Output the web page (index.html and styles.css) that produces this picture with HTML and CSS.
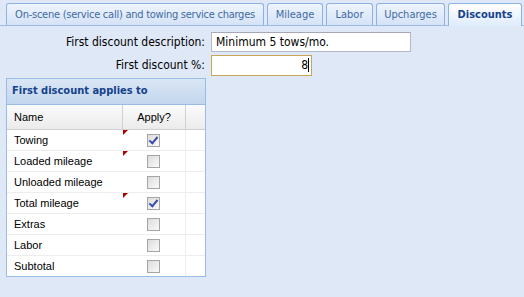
FILE: index.html
```html
<!DOCTYPE html>
<html lang="en">
<head>
  <meta charset="UTF-8" />
  <title>Discounts</title>
  <link rel="stylesheet" href="styles.css">
</head>
<body>

  <div class="tabs">
    <div class="tab t-onscene">On-scene (service call) and towing service charges</div>
    <div class="tab t-mileage">Mileage</div>
    <div class="tab t-labor">Labor</div>
    <div class="tab t-upcharges">Upcharges</div>
    <div class="tab t-discounts active">Discounts</div>
  </div>

  <div class="body">
    <div class="form-row">
      <label>First discount description:</label>
      <input type="text" class="desc" value="Minimum 5 tows/mo." />
    </div>
    <div class="form-row">
      <label>First discount %:</label>
      <div class="pct">8<span class="caret"></span></div>
    </div>

    <div class="panel">
      <div class="panel-title">First discount applies to</div>
      <table class="grid">
        <thead>
          <tr>
            <th class="col-name">Name</th>
            <th class="col-apply">Apply?</th>
            <th class="col-rest"></th>
          </tr>
        </thead>
        <tbody>
          <tr><td>Towing</td><td class="dirty"><span class="chk on"></span></td><td></td></tr>
          <tr><td>Loaded mileage</td><td class="dirty"><span class="chk"></span></td><td></td></tr>
          <tr><td>Unloaded mileage</td><td><span class="chk"></span></td><td></td></tr>
          <tr><td>Total mileage</td><td class="dirty"><span class="chk on"></span></td><td></td></tr>
          <tr><td>Extras</td><td><span class="chk"></span></td><td></td></tr>
          <tr><td>Labor</td><td><span class="chk"></span></td><td></td></tr>
          <tr><td>Subtotal</td><td><span class="chk"></span></td><td></td></tr>
        </tbody>
      </table>
    </div>
  </div>

</body>
</html>
```

FILE: styles.css
```css
body {
  margin: 0;
  background-color: #dfe8f6;
  font-family: "DejaVu Sans Condensed", "Liberation Sans", sans-serif;
  font-size: 12px;
  height: 297px;
  overflow: hidden;
}
.tabs {
  display: flex;
  gap: 3px;
  padding: 3px 0 0 6px;
  border-bottom: 1px solid #99bbe8;
  height: 22px;
}
.tab {
  box-sizing: border-box;
  border: 1px solid #8db2e3;
  border-bottom: none;
  border-radius: 3px 3px 0 0;
  background: linear-gradient(#eef4fd, #d5e3f7);
  color: #416aa3;
  padding-top: 4px;
  text-align: center;
  white-space: nowrap;
  font-family: "DejaVu Sans Condensed", sans-serif;
  font-size: 11px;
}
.t-onscene { width: 258px; letter-spacing: -0.25px; }
.t-mileage { width: 56px; }
.t-labor { width: 47px; }
.t-upcharges { width: 69px; }
.t-discounts { width: 74px; }
.tab.active {
  background: linear-gradient(#ffffff, #deecfd);
  color: #15428b;
  font-weight: bold;
  height: 23px;
}
.body {
  padding-top: 6px;
}
.form-row {
  display: flex;
  align-items: center;
  height: 20px;
  margin-bottom: 3px;
}
.form-row label {
  width: 211px;
  text-align: right;
  padding-right: 6px;
  box-sizing: border-box;
  color: #000;
  font-size: 12px;
}
.desc {
  width: 200px;
  height: 20px;
  box-sizing: border-box;
  border: 1px solid #b5b8c8;
  border-top-color: #a4a8b8;
  background: #fff;
  padding: 1px 4px;
  font-family: "DejaVu Sans Condensed", sans-serif;
  font-size: 12px;
  margin: 0;
}
.pct {
  width: 101px;
  height: 21px;
  box-sizing: border-box;
  border: 1px solid #c9a659;
  background: #fff;
  text-align: right;
  padding: 2px 2px 0 0;
  font-size: 12px;
}
.caret {
  display: inline-block;
  width: 1px;
  height: 14px;
  background: #000;
  vertical-align: -3px;
}
.panel {
  margin: 3px 0 0 6px;
  width: 200px;
  height: 199px;
  box-sizing: border-box;
  border: 1px solid #99bbe8;
  background: #fff;
}
.panel-title {
  height: 26px;
  line-height: 23px;
  padding-left: 5px;
  background: linear-gradient(#dae6f4, #c3d6ee);
  border-bottom: 1px solid #99bbe8;
  box-sizing: border-box;
  color: #15428b;
  font-weight: bold;
  font-size: 11px;
}
.grid {
  width: 100%;
  border-collapse: collapse;
  font-family: "Liberation Sans", Arial, sans-serif;
  font-size: 11px;
}
.grid th {
  height: 24px;
  font-weight: normal;
  text-align: left;
  padding: 0 0 0 7px;
  background: linear-gradient(#fbfbfb, #ebebeb);
  border-right: 1px solid #d0d0d0;
  border-bottom: 1px solid #d0d0d0;
}
.grid th.col-name { width: 108px; }
.grid th.col-apply { width: 62px; text-align: center; padding: 0; }
.grid th.col-rest { border-right: none; }
.grid td {
  height: 20px;
  padding: 0 0 0 7px;
  border-bottom: 1px solid #ededed;
}
.grid td:nth-child(2) {
  text-align: center;
  padding: 0;
  position: relative;
}
.grid td:nth-child(3) {
  border-left: 1px solid #ededed;
}
.grid tr:last-child td { border-bottom: none; }
.dirty::before {
  content: "";
  position: absolute;
  left: 0;
  top: 0;
  border-top: 5px solid #b10000;
  border-right: 5px solid transparent;
}
.chk {
  display: inline-block;
  width: 13px;
  height: 13px;
  box-sizing: border-box;
  border: 1px solid #a5a5a5;
  background: linear-gradient(135deg, #dcdcdc, #fafafa);
  vertical-align: middle;
  position: relative;
}
.chk.on::after {
  content: "";
  position: absolute;
  left: 3px;
  top: 0px;
  width: 3px;
  height: 7px;
  border-right: 2px solid #3b4fa8;
  border-bottom: 2px solid #3b4fa8;
  transform: rotate(40deg);
}
```
